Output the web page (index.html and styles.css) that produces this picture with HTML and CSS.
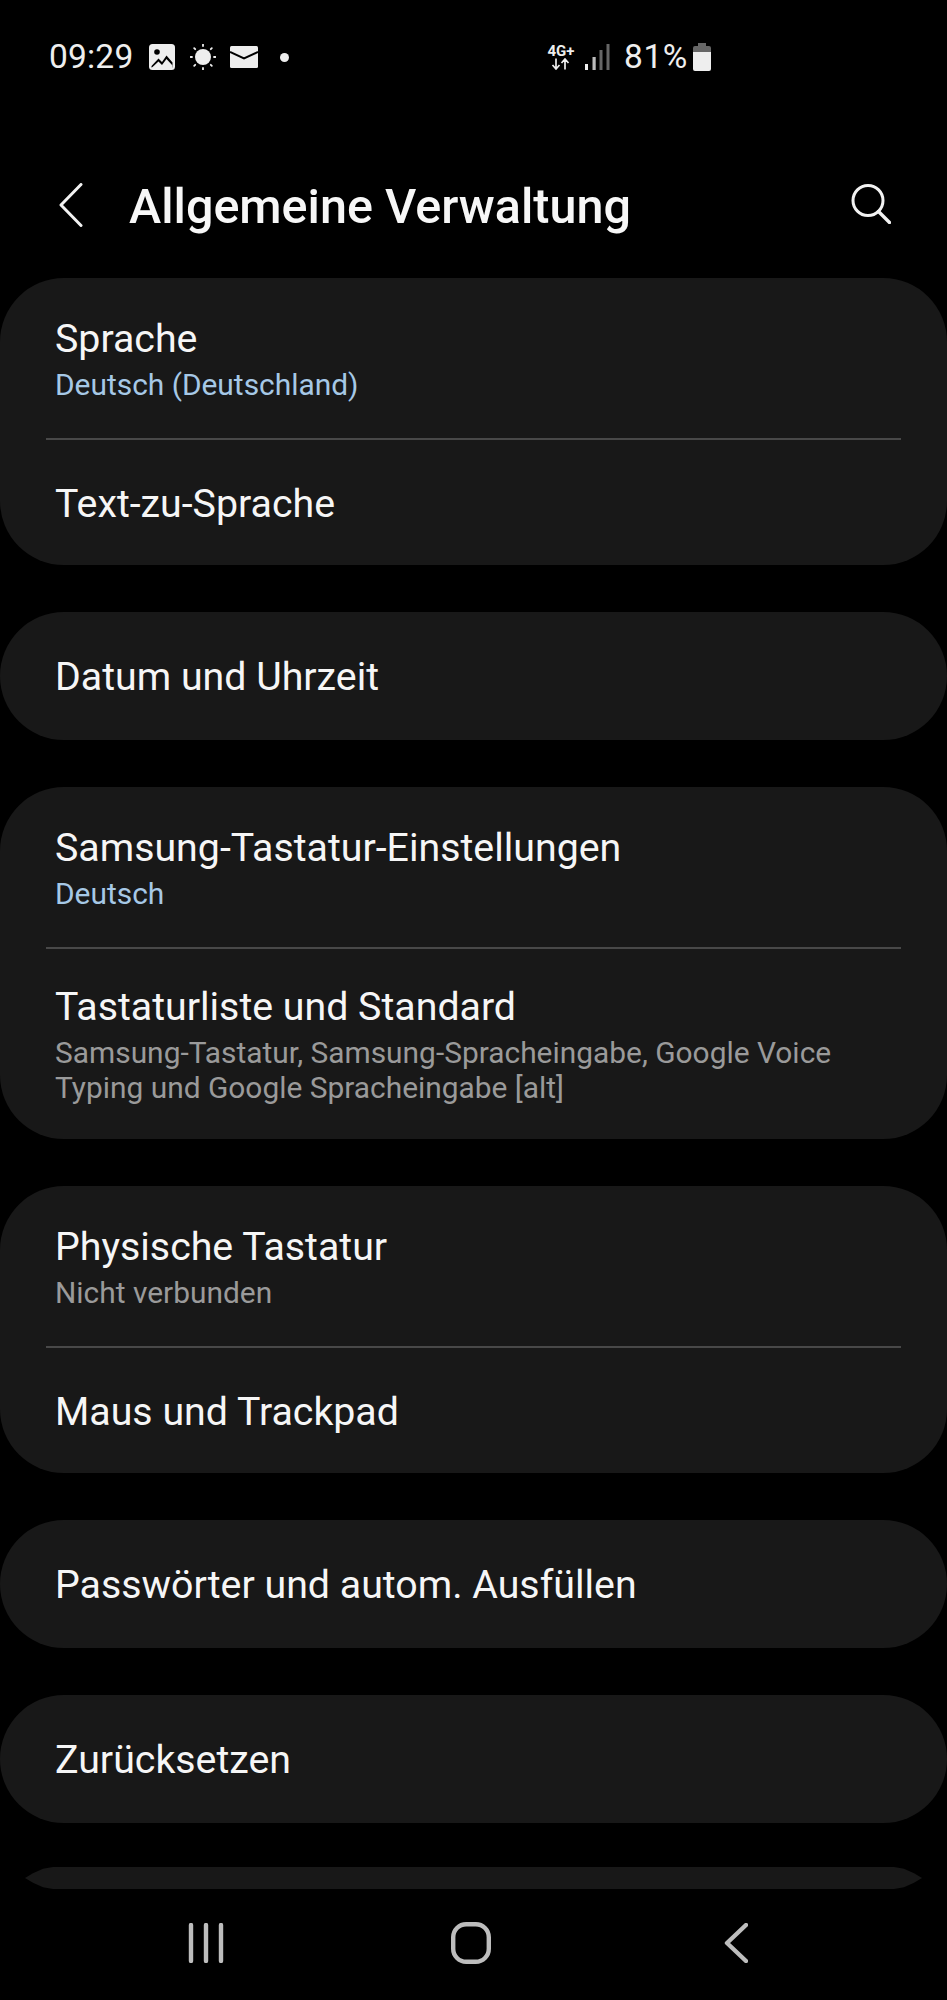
FILE: index.html
```html
<!DOCTYPE html>
<html lang="de">
<head>
<meta charset="utf-8">
<title>Allgemeine Verwaltung</title>
<link rel="stylesheet" href="styles.css">
</head>
<body>
<div class="phone">
  <div class="status">
    <div class="status-left">
      <span class="clock">09:29</span>
      <svg class="ic-photo" width="26" height="26" viewBox="0 0 26 26"><rect width="26" height="26" rx="3.5" fill="#eee"/><circle cx="8" cy="8" r="2.8" fill="#000"/><path d="M2.5 22 L9.5 14.5 L13 18 L17.5 11.5 L23.5 18.5 V23.5 H2.5Z" fill="#000"/><path d="M2.5 24 L9.5 17.5 L13 21 L17.5 15 L23.5 21.5 V24Z" fill="#eee"/></svg>
      <svg class="ic-sun" width="26" height="26" viewBox="0 0 26 26"><circle cx="13" cy="13" r="8" fill="#eee"/><g stroke="#eee" stroke-width="1.8" stroke-linecap="round"><path d="M13 0.5v1.5M13 24v1.5M0.5 13h1.5M24 13h1.5M4.2 4.2l1 1M20.8 20.8l1 1M4.2 21.8l1-1M20.8 5.2l1-1"/></g></svg>
      <svg class="ic-mail" width="28" height="22" viewBox="0 0 28 22"><rect width="28" height="22" rx="1.5" fill="#eee"/><path d="M0 6 L14 12.5 L28 6" fill="none" stroke="#000" stroke-width="2"/></svg>
      <span class="dot"></span>
    </div>
    <div class="status-right">
      <span class="net"><span class="net-label">4G+</span><svg class="ic-arrows" width="20" height="12" viewBox="0 0 20 12"><path d="M5 0.5v10M1.5 7l3.5 4 3.5-4M14 11.5v-10M10.5 5l3.5-4 3.5 4" fill="none" stroke="#eee" stroke-width="1.7"/></svg></span>
      <svg class="ic-signal" width="25" height="26" viewBox="0 0 25 26"><rect x="0" y="20" width="3" height="6" fill="#eee"/><rect x="7.5" y="13" width="3.2" height="13" fill="#bbb"/><rect x="14.5" y="6" width="3" height="20" fill="#666"/><rect x="21.5" y="0" width="3" height="26" fill="#666"/></svg>
      <span class="percent">81%</span>
      <svg class="ic-batt" width="18" height="28" viewBox="0 0 18 28"><path d="M5 0h8v3h3q2 0 2 2v4H0V5q0-2 2-2h3z" fill="#666"/><path d="M0 9h18v17q0 2-2 2H2q-2 0-2-2z" fill="#eee"/></svg>
    </div>
  </div>

  <div class="appbar">
    <svg class="ic-back" width="24" height="44" viewBox="0 0 24 44"><path d="M22 1.5 L2 22 L22 42.5" fill="none" stroke="#f2f2f2" stroke-width="3" stroke-linecap="round" stroke-linejoin="round"/></svg>
    <h1 class="title">Allgemeine Verwaltung</h1>
    <svg class="ic-search" width="40" height="40" viewBox="0 0 40 40"><circle cx="17" cy="16.5" r="15" fill="none" stroke="#f2f2f2" stroke-width="3"/><path d="M27.5 27.5 L38.5 38.5" fill="none" stroke="#f2f2f2" stroke-width="3.4" stroke-linecap="round"/></svg>
  </div>

  <main class="list">
    <section class="card">
      <div class="row two-line"><div class="label">Sprache</div><div class="sub blue">Deutsch (Deutschland)</div></div>
      <hr class="rule">
      <div class="row one-line"><div class="label">Text-zu-Sprache</div></div>
    </section>
    <section class="card single">
      <div class="row"><div class="label">Datum und Uhrzeit</div></div>
    </section>
    <section class="card">
      <div class="row two-line"><div class="label">Samsung-Tastatur-Einstellungen</div><div class="sub blue">Deutsch</div></div>
      <hr class="rule">
      <div class="row three-line"><div class="label">Tastaturliste und Standard</div><div class="sub grey">Samsung-Tastatur, Samsung-Spracheingabe, Google Voice<br>Typing und Google Spracheingabe [alt]</div></div>
    </section>
    <section class="card">
      <div class="row two-line"><div class="label">Physische Tastatur</div><div class="sub grey">Nicht verbunden</div></div>
      <hr class="rule">
      <div class="row one-line"><div class="label">Maus und Trackpad</div></div>
    </section>
    <section class="card single">
      <div class="row"><div class="label">Passwörter und autom. Ausfüllen</div></div>
    </section>
    <section class="card single">
      <div class="row"><div class="label">Zurücksetzen</div></div>
    </section>
    <div class="peek"></div>
  </main>

  <nav class="navbar">
    <svg class="nav-recents" width="36" height="40" viewBox="0 0 36 40"><path d="M3 2v36M18 2v36M33 2v36" fill="none" stroke="#bdbdbd" stroke-width="4.4" stroke-linecap="round"/></svg>
    <svg class="nav-home" width="40" height="42" viewBox="0 0 40 42"><rect x="2.2" y="2.2" width="35.6" height="37.6" rx="13" fill="none" stroke="#bdbdbd" stroke-width="4.4"/></svg>
    <svg class="nav-back" width="24" height="40" viewBox="0 0 24 40"><path d="M22 2 L3 20 L22 38" fill="none" stroke="#bdbdbd" stroke-width="4.4" stroke-linecap="round" stroke-linejoin="round"/></svg>
  </nav>
</div>
</body>
</html>
```
FILE: styles.css
```css
* { box-sizing: border-box; }
html, body { margin: 0; padding: 0; background: #000; }
body { font-family: Roboto, "Noto Sans", sans-serif; color: #f5f5f5; }
.phone { width: 947px; height: 2000px; display: flex; flex-direction: column; overflow: hidden; background: #000; }

.status { height: 114px; padding: 42px 0 0 49px; display: flex; align-items: flex-start; color: #eee; }
.status-left { width: 498px; display: flex; align-items: center; height: 30px; }
.clock { font-size: 33.5px; line-height: 30px; letter-spacing: 0.2px; width: 100px; }
.ic-sun { margin-left: 15px; }
.ic-mail { margin-left: 14px; }
.dot { width: 9px; height: 9px; border-radius: 50%; background: #eee; margin-left: 22px; }
.status-right { display: flex; align-items: center; height: 30px; }
.net { display: flex; flex-direction: column; align-items: center; width: 28px; margin-right: 10px; }
.net-label { font-size: 15px; line-height: 14px; font-weight: 700; }
.percent { font-size: 33.5px; line-height: 30px; margin-left: 14px; margin-right: 5px; letter-spacing: 0.6px; }

.appbar { height: 164px; padding: 18px 0 0 59px; display: flex; align-items: center; }
.title { font-size: 48.5px; font-weight: 500; margin: 4px 0 0 46px; flex: 1; color: #f7f7f7; line-height: 60px; }
.ic-search { margin: -2px 56px 0 0; }

.list { height: 1611px; display: flex; flex-direction: column; gap: 47px; overflow: hidden; }
.card { background: #181818; border-radius: 64px; flex: none; }
.row { padding: 2px 55px 0; display: flex; flex-direction: column; justify-content: center; }
.card.single .row { height: 128px; }
.two-line { height: 160px; }
.one-line { height: 125px; }
.three-line { height: 190px; padding-top: 0; }
.label { font-size: 39.3px; line-height: 46px; color: #f6f6f6; }
.sub { font-size: 29.9px; line-height: 35px; margin-top: 5px; }
.blue { color: #a6c8e6; }
.grey { color: #9a9a9a; }
.rule { margin: 0 46px; border: 0; height: 2px; background: #484848; }
.peek { flex: none; height: 22px; margin: -3px 25px 0; background: #181818; clip-path: polygon(0 50%, 8px 28%, 18px 8%, 28px 0, calc(100% - 28px) 0, calc(100% - 18px) 8%, calc(100% - 8px) 28%, 100% 50%, calc(100% - 8px) 72%, calc(100% - 18px) 92%, calc(100% - 28px) 100%, 28px 100%, 18px 92%, 8px 72%); }

.navbar { height: 111px; display: flex; align-items: center; padding: 0 0 4px 188px; }
.nav-home { margin-left: 227px; }
.nav-back { margin-left: 233px; }
```
